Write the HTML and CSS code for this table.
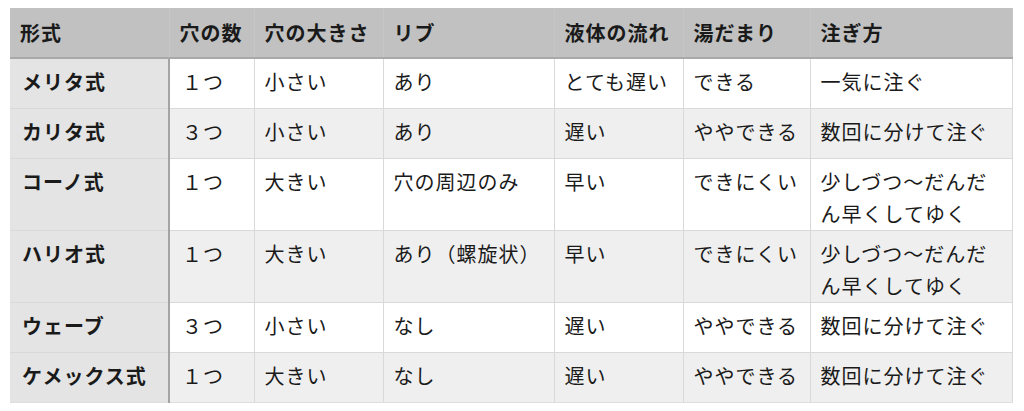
FILE: index.html
```html
<!DOCTYPE html>
<html lang="ja">
<head>
<meta charset="utf-8">
<link rel="stylesheet" href="styles.css">
</head>
<body>
<table class="cmp">
  <colgroup>
    <col class="c1"><col class="c2"><col class="c3"><col class="c4"><col class="c5"><col class="c6"><col class="c7">
  </colgroup>
  <thead>
    <tr><th>形式</th><th>穴の数</th><th>穴の大きさ</th><th>リブ</th><th>液体の流れ</th><th>湯だまり</th><th>注ぎ方</th></tr>
  </thead>
  <tbody>
    <tr class="odd"><th>メリタ式</th><td>１つ</td><td>小さい</td><td>あり</td><td>とても遅い</td><td>できる</td><td>一気に注ぐ</td></tr>
    <tr class="even"><th>カリタ式</th><td>３つ</td><td>小さい</td><td>あり</td><td>遅い</td><td>ややできる</td><td>数回に分けて注ぐ</td></tr>
    <tr class="odd"><th>コーノ式</th><td>１つ</td><td>大きい</td><td>穴の周辺のみ</td><td>早い</td><td>できにくい</td><td>少しづつ〜だんだん早くしてゆく</td></tr>
    <tr class="even"><th>ハリオ式</th><td>１つ</td><td>大きい</td><td>あり（螺旋状）</td><td>早い</td><td>できにくい</td><td>少しづつ〜だんだん早くしてゆく</td></tr>
    <tr class="odd"><th>ウェーブ</th><td>３つ</td><td>小さい</td><td>なし</td><td>遅い</td><td>ややできる</td><td>数回に分けて注ぐ</td></tr>
    <tr class="even"><th>ケメックス式</th><td>１つ</td><td>大きい</td><td>なし</td><td>遅い</td><td>ややできる</td><td>数回に分けて注ぐ</td></tr>
  </tbody>
</table>
</body>
</html>
```
FILE: styles.css
```css
html, body {
  margin: 0;
  padding: 0;
  background: #ffffff;
}
body {
  padding: 8px 0 0 10px;
  font-family: "Noto Sans CJK JP", "Noto Sans", sans-serif;
  color: #1a1a1a;
}
.cmp {
  border-collapse: collapse;
  table-layout: fixed;
  width: 1002px;
  font-size: 20px;
  line-height: 32px;
}
.c1 { width: 159px; }
.c2 { width: 85px; }
.c3 { width: 129px; }
.c4 { width: 171px; }
.c5 { width: 129px; }
.c6 { width: 127px; }
.c7 { width: 202px; }

.cmp th, .cmp td {
  text-align: left;
  vertical-align: top;
  padding: 7px 8px 0 10px;
  border: 1px solid #d9d9d9;
  letter-spacing: 1px;
  overflow: hidden;
}
.cmp thead th {
  background: #c0c1c0;
  font-weight: bold;
  height: 40px;
  padding-top: 9px;
  border-color: #c6c6c6;
  border-top: none;
  border-bottom: 2px solid #a9a9a9;
}
.cmp tr { height: 50px; }
.cmp tbody th {
  background: #e3e4e3;
  font-weight: bold;
  padding-left: 12px;
  border-right: 2px solid #a4a4a4;
}
.cmp tbody th, .cmp thead th:first-child { border-left: none; }
.cmp tr.odd td { background: #ffffff; }
.cmp tr.even td { background: #efefef; }
.cmp td:nth-child(2) { padding-left: 12px; }
.cmp tbody tr:last-child th, .cmp tbody tr:last-child td { border-bottom: 1px solid #dedede; }
```
